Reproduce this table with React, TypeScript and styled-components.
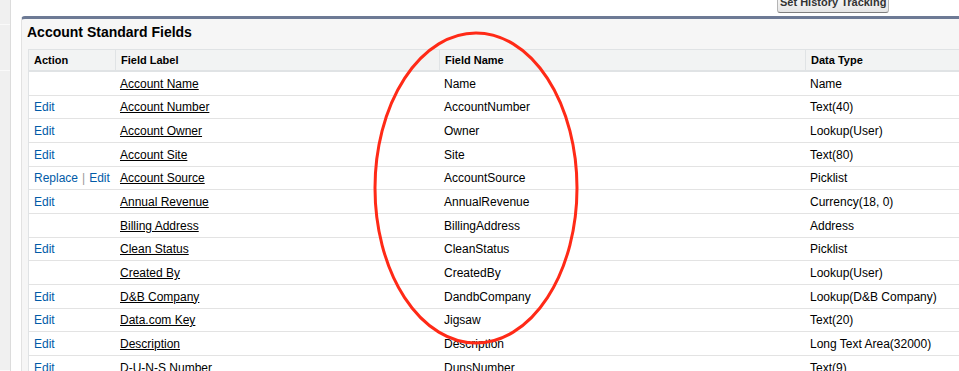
import React from "react";
import styled, { createGlobalStyle } from "styled-components";

const Global = createGlobalStyle`
  html, body { margin: 0; padding: 0; background: #fff; }
  body { font-family: "Liberation Sans", Arial, sans-serif; color: #000; }
  #root { width: 959px; height: 371px; overflow: hidden; }
`;

const Page = styled.div`
  position: relative;
  display: flex;
  width: 959px;
  height: 371px;
  overflow: hidden;
`;

const Sidebar = styled.div`
  width: 10px;
  flex: none;
  background: #f0f0f0;
  border-right: 1px solid #dcdcdc;
  display: flex;
  flex-direction: column;
`;

const SideItem = styled.div<{ $h?: number }>`
  height: ${(p) => (p.$h ? `${p.$h}px` : "auto")};
  flex: ${(p) => (p.$h ? "none" : "1")};
  border-bottom: 1px solid #fafafa;
`;

const Main = styled.div`
  flex: none;
  width: 1100px;
  padding-left: 10px;
  display: flex;
  flex-direction: column;
`;

const TopBar = styled.div`
  height: 13px;
  margin-bottom: 3px;
  display: flex;
  align-items: flex-end;
  padding-left: 756px;
`;

const Button = styled.button`
  height: 22px;
  flex: none;
  padding: 0 2px;
  border: 1px solid #b5b5b5;
  border-bottom-color: #7f7f7f;
  border-radius: 3px;
  background: linear-gradient(#fefefe, #e6e6e6);
  font-family: "Liberation Sans", Arial, sans-serif;
  font-weight: bold;
  font-size: 11px;
  color: #333;
  width: 112px;
  white-space: nowrap;
  line-height: 20px;
`;

const Panel = styled.div`
  border-top: 3px solid #6d7a95;
  border-left: 1px solid #e2e2e2;
  border-top-left-radius: 4px;
  background: #f6f6f6;
  padding: 0 0 0 5px;
  flex: 1;
`;

const Title = styled.h2`
  margin: 0;
  height: 30px;
  display: flex;
  align-items: center;
  font-size: 14px;
  font-weight: bold;
  color: #000;
  padding-bottom: 5px;
  box-sizing: border-box;
`;

const Table = styled.div`
  margin-left: 1px;
  display: grid;
  grid-template-columns: 86px 324px 366px 1fr;
  border-left: 1px solid #e0e3e5;
  border-top: 1px solid #e0e3e5;
  background: #fff;
`;

const HeadCell = styled.div<{ $first?: boolean }>`
  height: 22px;
  box-sizing: border-box;
  background: #f2f3f3;
  border-bottom: 2px solid #e0e3e5;
  border-left: ${(p) => (p.$first ? "none" : "1px solid #e0e3e5")};
  padding: 0 5px;
  display: flex;
  align-items: center;
  font-size: 11px;
  font-weight: bold;
  color: #000;
`;

const Row = styled.div`
  display: contents;
`;

const Cell = styled.div`
  height: 23.67px;
  box-sizing: border-box;
  border-bottom: 1px solid #e3e3e3;
  padding: 1px 5px 0;
  display: flex;
  align-items: center;
  font-size: 12px;
  color: #000;
  white-space: nowrap;
`;

const ActionLink = styled.a`
  color: #015ba7;
  text-decoration: none;
`;

const Sep = styled.span`
  color: #999;
  margin: 0 4px;
`;

const LabelLink = styled.a`
  color: #000;
  text-decoration: underline;
`;

const Overlay = styled.svg`
  position: absolute;
  left: 0;
  top: 0;
  pointer-events: none;
`;

type Field = { actions: string[]; label: string; name: string; type: string };

const fields: Field[] = [
  { actions: [], label: "Account Name", name: "Name", type: "Name" },
  { actions: ["Edit"], label: "Account Number", name: "AccountNumber", type: "Text(40)" },
  { actions: ["Edit"], label: "Account Owner", name: "Owner", type: "Lookup(User)" },
  { actions: ["Edit"], label: "Account Site", name: "Site", type: "Text(80)" },
  { actions: ["Replace", "Edit"], label: "Account Source", name: "AccountSource", type: "Picklist" },
  { actions: ["Edit"], label: "Annual Revenue", name: "AnnualRevenue", type: "Currency(18, 0)" },
  { actions: [], label: "Billing Address", name: "BillingAddress", type: "Address" },
  { actions: ["Edit"], label: "Clean Status", name: "CleanStatus", type: "Picklist" },
  { actions: [], label: "Created By", name: "CreatedBy", type: "Lookup(User)" },
  { actions: ["Edit"], label: "D&B Company", name: "DandbCompany", type: "Lookup(D&B Company)" },
  { actions: ["Edit"], label: "Data.com Key", name: "Jigsaw", type: "Text(20)" },
  { actions: ["Edit"], label: "Description", name: "Description", type: "Long Text Area(32000)" },
  { actions: ["Edit"], label: "D-U-N-S Number", name: "DunsNumber", type: "Text(9)" },
];

export default function App() {
  return (
    <Page>
      <Global />
      <Sidebar>
        <SideItem $h={24} />
        <SideItem $h={45} />
        <SideItem />
      </Sidebar>
      <Main>
        <TopBar>
          <Button>Set History Tracking</Button>
        </TopBar>
        <Panel>
          <Title>Account Standard Fields</Title>
          <Table>
            <HeadCell $first>Action</HeadCell>
            <HeadCell>Field Label</HeadCell>
            <HeadCell>Field Name</HeadCell>
            <HeadCell>Data Type</HeadCell>
            {fields.map((f) => (
              <Row key={f.name}>
                <Cell>
                  {f.actions.map((a, i) => (
                    <React.Fragment key={a}>
                      {i > 0 && <Sep>|</Sep>}
                      <ActionLink href="#">{a}</ActionLink>
                    </React.Fragment>
                  ))}
                </Cell>
                <Cell>
                  <LabelLink href="#">{f.label}</LabelLink>
                </Cell>
                <Cell>{f.name}</Cell>
                <Cell>{f.type}</Cell>
              </Row>
            ))}
          </Table>
        </Panel>
      </Main>
      <Overlay width="959" height="371" viewBox="0 0 959 371">
        <ellipse cx="476" cy="188" rx="101" ry="155" fill="none" stroke="#ff2a17" strokeWidth="3" />
      </Overlay>
    </Page>
  );
}
